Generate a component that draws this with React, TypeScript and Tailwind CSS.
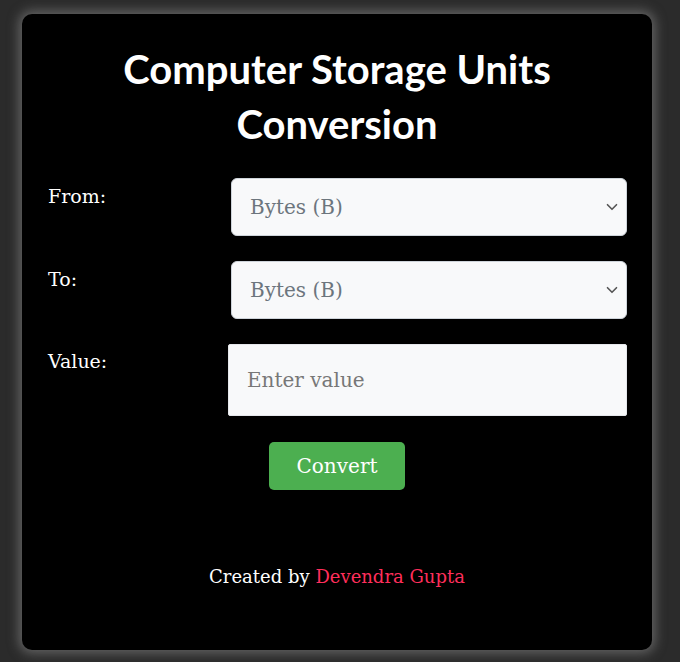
import React, { useState } from 'react';

const units = ['Bytes (B)', 'Kilobytes (KB)', 'Megabytes (MB)', 'Gigabytes (GB)', 'Terabytes (TB)'];

const Chevron = () => (
  <svg className="pointer-events-none absolute right-[9px] top-1/2 -translate-y-1/2" width="12" height="12" viewBox="0 0 16 16" fill="none">
    <path d="M2 5l6 6 6-6" stroke="#555" strokeWidth="2.2" strokeLinecap="round" strokeLinejoin="round" />
  </svg>
);

const App: React.FC = () => {
  const [from, setFrom] = useState(units[0]);
  const [to, setTo] = useState(units[0]);
  const [value, setValue] = useState('');

  const serif = { fontFamily: '"DejaVu Serif", "Liberation Serif", serif' };

  return (
    <div className="min-h-screen bg-[#2b2b2b] pt-[14px] pl-[22px]">
      <div className="w-[630px] h-[636px] bg-black rounded-[10px] shadow-[0_0_12px_3px_rgba(150,150,150,0.55)] px-[25px] pt-[28px] text-white" style={serif}>
        <h1 className="text-center font-bold text-[40px] leading-[55px] px-[50px]" style={{ fontFamily: 'Lato, sans-serif' }}>
          Computer Storage Units Conversion
        </h1>

        <div className="mt-[26px] flex items-start">
          <label className="w-[184px] pl-[1px] pt-[3px] text-[19px] leading-[30px]">From:</label>
          <div className="relative flex-1">
            <select value={from} onChange={e => setFrom(e.target.value)} className="appearance-none w-full h-[58px] rounded-[6px] border border-[#ced4da] bg-[#f8f9fa] pl-[18px] text-[20px] text-[#6c757d] outline-none" style={serif}>
              {units.map(u => <option key={u}>{u}</option>)}
            </select>
            <Chevron />
          </div>
        </div>

        <div className="mt-[25px] flex items-start">
          <label className="w-[184px] pl-[1px] pt-[3px] text-[19px] leading-[30px]">To:</label>
          <div className="relative flex-1">
            <select value={to} onChange={e => setTo(e.target.value)} className="appearance-none w-full h-[58px] rounded-[6px] border border-[#ced4da] bg-[#f8f9fa] pl-[18px] text-[20px] text-[#6c757d] outline-none" style={serif}>
              {units.map(u => <option key={u}>{u}</option>)}
            </select>
            <Chevron />
          </div>
        </div>

        <div className="mt-[25px] flex items-start">
          <label className="w-[181px] pl-[1px] pt-[2px] text-[19px] leading-[30px]">Value:</label>
          <input value={value} onChange={e => setValue(e.target.value)} placeholder="Enter value" className="flex-1 h-[72px] rounded-[2px] border border-[#e5e7eb] bg-[#f8f9fa] pl-[18px] text-[20px] text-[#333] placeholder:text-[#777] outline-none" style={serif} />
        </div>

        <div className="mt-[26px] flex justify-center">
          <button className="w-[136px] h-[48px] rounded-[5px] bg-[#4caf50] text-[20px] text-white" style={serif}>Convert</button>
        </div>

        <p className="mt-[75px] text-center text-[18px] leading-[24px]">
          Created by <span className="text-[#ff2e5b]">Devendra Gupta</span>
        </p>
      </div>
    </div>
  );
};

export default App;
